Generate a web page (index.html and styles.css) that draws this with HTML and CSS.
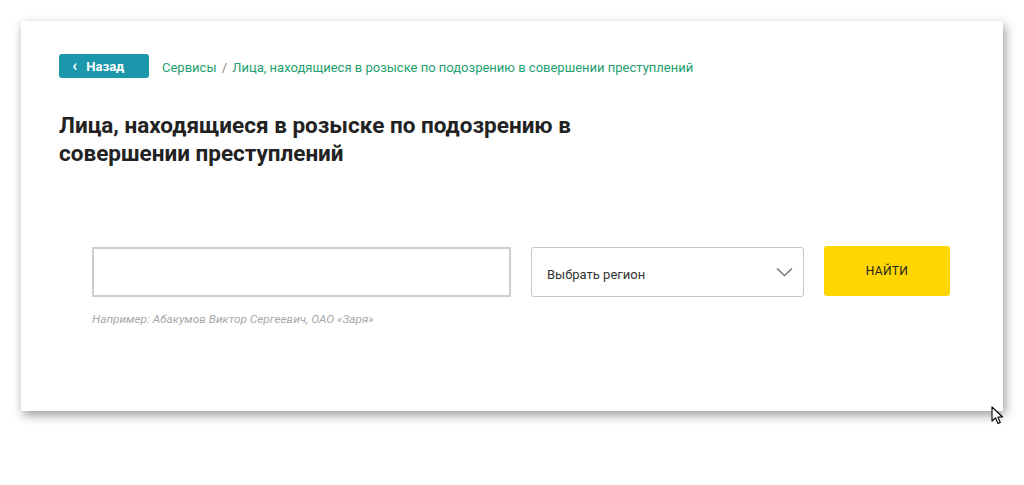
FILE: index.html
```html
<!DOCTYPE html>
<html>
	<head>
		<meta charset="UTF-8">
		<title>Лица, находящиеся в розыске</title>
		<link rel="stylesheet" href="styles.css">
	</head>
	<body>
		<div class="page">
			<div class="card">
				<div class="crumbs">
					<a class="back-btn" href="javascript:void(0)"><span class="back-arrow">&#8249;</span>Назад</a>
					<div class="crumbs-path">
						<a href="javascript:void(0)">Сервисы</a>
						<span class="crumbs-sep">/</span>
						<span>Лица, находящиеся в розыске по подозрению в совершении преступлений</span>
					</div>
				</div>
				<h1 class="title">Лица, находящиеся в розыске по подозрению в совершении преступлений</h1>
				<div class="search">
					<div class="search-row">
						<div class="search-field">
							<input type="text" class="search-input">
							<div class="search-hint">Например: Абакумов Виктор Сергеевич, ОАО «Заря»</div>
						</div>
						<div class="region-select">
							<span>Выбрать регион</span>
							<svg class="region-arrow" width="17" height="10" viewBox="0 0 17 10">
								<path d="M1 1.5 L8.5 8.5 L16 1.5" fill="none" stroke="#777" stroke-width="1.6"/>
							</svg>
						</div>
						<a class="find-btn" href="javascript:void(0)">НАЙТИ</a>
					</div>
				</div>
			</div>
		</div>
		<svg class="cursor" width="13" height="20" viewBox="0 0 13 20">
			<path d="M1 1 L1 15 L4.5 11.8 L7 17.5 L9.3 16.5 L6.9 11 L11.5 11 Z" fill="#fff" stroke="#000" stroke-width="1.1" stroke-linejoin="round"/>
		</svg>
	</body>
</html>
```
FILE: styles.css
```css
* {
	margin: 0;
	padding: 0;
	box-sizing: border-box;
}

body {
	background: #fff;
	font-family: Roboto, "Liberation Sans", sans-serif;
	color: #222;
}

.page {
	min-height: 485px;
	padding: 21px 21px 0;
}

.card {
	width: 982px;
	height: 390px;
	background: #fff;
	box-shadow: 2px 4px 10px rgba(0, 0, 0, 0.4);
	padding: 33px 38px 0;
}

.crumbs {
	display: flex;
	align-items: center;
	height: 24px;
}

.back-btn {
	display: flex;
	align-items: center;
	width: 90px;
	height: 24px;
	padding-left: 13px;
	background-color: #1b97ab;
	border-radius: 3px;
	color: #fff;
	font-size: 13px;
	font-weight: bold;
	text-decoration: none;
}

.back-arrow {
	font-size: 17px;
	margin-right: 9px;
	position: relative;
	top: -1px;
}

.crumbs-path {
	margin-left: 13px;
	padding-top: 3px;
	font-size: 13px;
	color: #22a070;
}

.crumbs-path a {
	color: #22a070;
	text-decoration: none;
}

.crumbs-sep {
	margin: 0 2px;
	color: #888;
}

.title {
	width: 570px;
	margin-top: 33px;
	font-size: 22.5px;
	line-height: 28px;
	font-weight: bold;
	color: #222;
}

.search {
	padding: 80px 0 0 33px;
}

.search-row {
	display: flex;
	align-items: flex-start;
}

.search-field {
	width: 419px;
}

.search-input {
	display: block;
	width: 100%;
	height: 50px;
	border: 2px solid #cdcdcd;
	outline: none;
}

.search-hint {
	margin-top: 15px;
	font-size: 11.8px;
	font-style: italic;
	color: #a8a8a8;
}

.region-select {
	display: flex;
	align-items: center;
	justify-content: space-between;
	width: 273px;
	height: 50px;
	margin-left: 20px;
	padding: 4px 10px 0 15px;
	border: 1px solid #c6c6c6;
	border-radius: 3px;
	font-size: 13px;
	color: #333;
}

.region-arrow {
	margin-top: -4px;
}

.find-btn {
	display: flex;
	align-items: center;
	justify-content: center;
	width: 126px;
	height: 50px;
	margin-left: 20px;
	margin-top: -1px;
	background-color: #ffd600;
	border-radius: 3px;
	color: #222;
	font-size: 12px;
	text-decoration: none;
	letter-spacing: 0.3px;
}

.cursor {
	position: absolute;
	left: 991px;
	top: 406px;
}
```
